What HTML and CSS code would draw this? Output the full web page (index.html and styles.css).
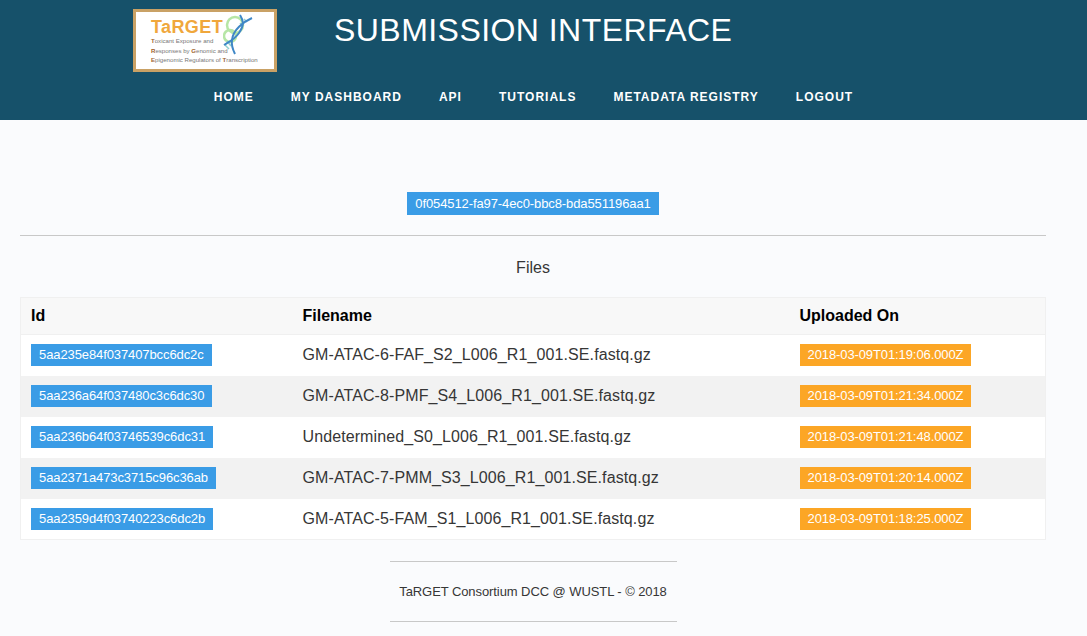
FILE: index.html
```html
<!DOCTYPE html>
<html lang="en">
<head>
  <meta charset="UTF-8">
  <title>TaRGET Submission Interface</title>
  <link rel="stylesheet" href="styles.css">
</head>
<body>
  <header class="site-header">
    <div class="brand-row">
      <div class="logo">
        <div class="logo-text">
          <div class="logo-name">TaRGET</div>
          <div class="logo-line"><b>T</b>oxicant Exposure and</div>
          <div class="logo-line"><b>R</b>esponses by <b>G</b>enomic and</div>
          <div class="logo-line"><b>E</b>pigenomic Regulators of <b>T</b>ranscription</div>
        </div>
        <svg class="logo-dna" viewBox="0 0 32 42" width="32" height="42">
          <circle cx="12" cy="11" r="8" fill="none" stroke="#b6e6a6" stroke-width="2.5"/>
          <circle cx="7" cy="22" r="6" fill="none" stroke="#b6e6a6" stroke-width="2.5"/>
          <path d="M21 5l3 3M17 9l3 3M4 27l4 5M2 31l4 4" stroke="#8fd0cf" stroke-width="1.5"/>
          <path d="M29 4C20 8 10 16 9 26C8 32 10 36 12 40" fill="none" stroke="#3f87c6" stroke-width="2"/>
          <path d="M17 1C20 6 22 10 16 19C12 25 6 28 1 31" fill="none" stroke="#3f87c6" stroke-width="2"/>
        </svg>
      </div>
      <h1 class="site-title">SUBMISSION INTERFACE</h1>
    </div>
    <nav class="main-nav">
      <a href="#">Home</a>
      <a href="#">My Dashboard</a>
      <a href="#">API</a>
      <a href="#">Tutorials</a>
      <a href="#">Metadata Registry</a>
      <a href="#">Logout</a>
    </nav>
  </header>

  <main class="content">
    <div class="submission-id"><span class="tag tag-blue tag-tall">0f054512-fa97-4ec0-bbc8-bda551196aa1</span></div>
    <hr class="rule">
    <p class="section-title">Files</p>

    <table class="files">
      <thead>
        <tr><th class="col-id">Id</th><th class="col-name">Filename</th><th>Uploaded On</th></tr>
      </thead>
      <tbody>
        <tr>
          <td><span class="tag tag-blue">5aa235e84f037407bcc6dc2c</span></td>
          <td>GM-ATAC-6-FAF_S2_L006_R1_001.SE.fastq.gz</td>
          <td><span class="tag tag-orange">2018-03-09T01:19:06.000Z</span></td>
        </tr>
        <tr>
          <td><span class="tag tag-blue">5aa236a64f037480c3c6dc30</span></td>
          <td>GM-ATAC-8-PMF_S4_L006_R1_001.SE.fastq.gz</td>
          <td><span class="tag tag-orange">2018-03-09T01:21:34.000Z</span></td>
        </tr>
        <tr>
          <td><span class="tag tag-blue">5aa236b64f03746539c6dc31</span></td>
          <td>Undetermined_S0_L006_R1_001.SE.fastq.gz</td>
          <td><span class="tag tag-orange">2018-03-09T01:21:48.000Z</span></td>
        </tr>
        <tr>
          <td><span class="tag tag-blue">5aa2371a473c3715c96c36ab</span></td>
          <td>GM-ATAC-7-PMM_S3_L006_R1_001.SE.fastq.gz</td>
          <td><span class="tag tag-orange">2018-03-09T01:20:14.000Z</span></td>
        </tr>
        <tr>
          <td><span class="tag tag-blue">5aa2359d4f03740223c6dc2b</span></td>
          <td>GM-ATAC-5-FAM_S1_L006_R1_001.SE.fastq.gz</td>
          <td><span class="tag tag-orange">2018-03-09T01:18:25.000Z</span></td>
        </tr>
      </tbody>
    </table>

    <footer class="site-footer">
      <p>TaRGET Consortium DCC @ WUSTL - © 2018</p>
    </footer>
  </main>
</body>
</html>
```
FILE: styles.css
```css
html, body {
  margin: 0;
  padding: 0;
}
body {
  font-family: "Liberation Sans", Arial, sans-serif;
  background: #fafbfd;
  color: #363636;
  overflow: hidden;
}
.site-header {
  background: #16516a;
  height: 120px;
}
.brand-row {
  display: flex;
  height: 74px;
  padding-left: 133px;
}
.logo {
  box-sizing: border-box;
  width: 144px;
  height: 63px;
  margin-top: 9px;
  background: #fff;
  border: 3px solid #c9a165;
  display: flex;
  padding: 6px 0 0 15px;
  position: relative;
}
.logo-name {
  color: #f0a73c;
  font-size: 18px;
  font-weight: bold;
  line-height: 18px;
  letter-spacing: 0.4px;
}
.logo-line {
  color: #777;
  font-size: 6.1px;
  line-height: 9.5px;
  white-space: nowrap;
}
.logo-line b {
  color: #a0622a;
}
.logo-dna {
  position: absolute;
  left: 87px;
  top: 2px;
}
.site-title {
  margin: 12px 0 0 57px;
  color: #fff;
  font-size: 32px;
  font-weight: normal;
  line-height: 36px;
  letter-spacing: 0.45px;
}
.main-nav {
  display: flex;
  justify-content: center;
  gap: 37px;
  padding-top: 16px;
  padding-right: 20px;
}
.main-nav a {
  color: #fff;
  font-size: 12px;
  font-weight: bold;
  line-height: 14px;
  letter-spacing: 1px;
  text-transform: uppercase;
  text-decoration: none;
}
.content {
  padding: 72px 41px 0 20px;
}
.submission-id {
  text-align: center;
  height: 23px;
}
.tag {
  display: inline-block;
  color: #fff;
  font-size: 13px;
  line-height: 22px;
  height: 22px;
  padding: 0 8px;
  letter-spacing: -0.1px;
}
.tag-tall {
  line-height: 23px;
  height: 23px;
}
.tag-blue {
  background: #3a9ce6;
}
.tag-orange {
  background: #fca625;
}
.rule {
  border: 0;
  border-top: 1px solid #c8c8c8;
  margin: 20px 0 0;
}
.section-title {
  margin: 23px 0 0;
  text-align: center;
  font-size: 16px;
  line-height: 18px;
}
.files {
  width: 100%;
  margin-top: 20px;
  border-collapse: collapse;
  border: 1px solid #f0f0f0;
  background: #fff;
  table-layout: fixed;
}
.col-id {
  width: 272px;
}
.col-name {
  width: 497px;
}
.files th {
  box-sizing: border-box;
  background: #f8f8f8;
  border-bottom: 1px solid #f0f0f0;
  color: #000;
  font-size: 16px;
  font-weight: bold;
  text-align: left;
  height: 37px;
  padding: 0 10px;
}
.files td {
  box-sizing: border-box;
  font-size: 16px;
  letter-spacing: 0.1px;
  height: 41px;
  padding: 0 10px;
}
.files tbody tr:nth-child(even) td {
  background: #f2f2f2;
}
.site-footer {
  width: 287px;
  margin: 21px auto 0;
  border-top: 1px solid #c8c8c8;
  border-bottom: 1px solid #c8c8c8;
}
.site-footer p {
  margin: 0;
  text-align: center;
  font-size: 13px;
  letter-spacing: -0.08px;
  line-height: 59px;
}
```
